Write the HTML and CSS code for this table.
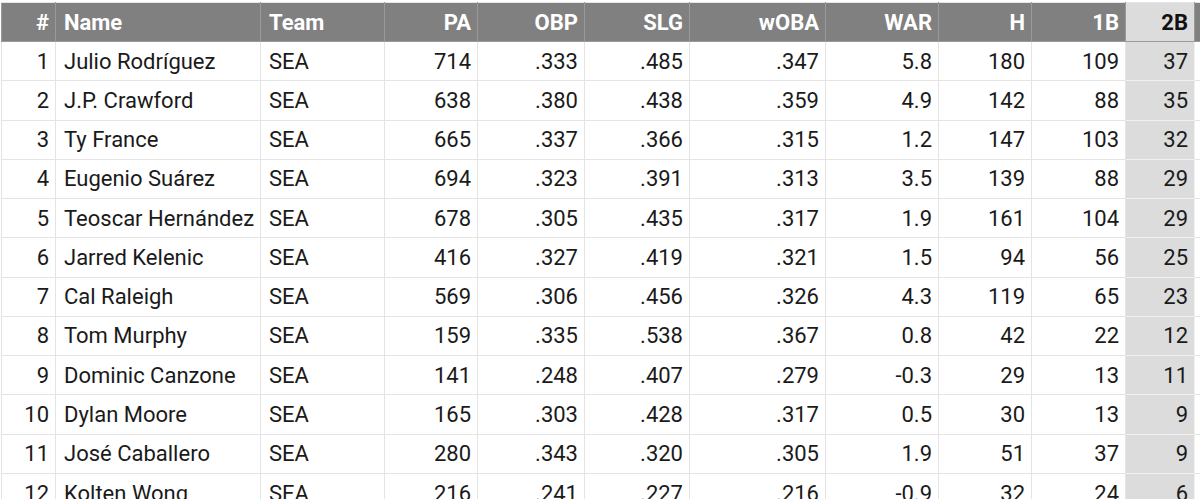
FILE: index.html
```html
<!DOCTYPE html>
<html>
<head>
<meta charset="utf-8">
<link rel="stylesheet" href="styles.css">
</head>
<body>
<div class="wrap">
<table class="stats">
<colgroup>
<col class="c-rank"><col class="c-name"><col class="c-team"><col class="c-pa"><col class="c-obp"><col class="c-slg"><col class="c-woba"><col class="c-war"><col class="c-h"><col class="c-1b"><col class="c-2b"><col class="c-3b">
</colgroup>
<thead>
<tr><th class="num">#</th><th>Name</th><th>Team</th><th class="num">PA</th><th class="num">OBP</th><th class="num">SLG</th><th class="num">wOBA</th><th class="num">WAR</th><th class="num">H</th><th class="num">1B</th><th class="num sorted">2B</th><th class="num"></th></tr>
</thead>
<tbody>
<tr><td class="num">1</td><td>Julio Rodríguez</td><td>SEA</td><td class="num">714</td><td class="num">.333</td><td class="num">.485</td><td class="num">.347</td><td class="num">5.8</td><td class="num">180</td><td class="num">109</td><td class="num sorted">37</td><td></td></tr>
<tr><td class="num">2</td><td>J.P. Crawford</td><td>SEA</td><td class="num">638</td><td class="num">.380</td><td class="num">.438</td><td class="num">.359</td><td class="num">4.9</td><td class="num">142</td><td class="num">88</td><td class="num sorted">35</td><td></td></tr>
<tr><td class="num">3</td><td>Ty France</td><td>SEA</td><td class="num">665</td><td class="num">.337</td><td class="num">.366</td><td class="num">.315</td><td class="num">1.2</td><td class="num">147</td><td class="num">103</td><td class="num sorted">32</td><td></td></tr>
<tr><td class="num">4</td><td>Eugenio Suárez</td><td>SEA</td><td class="num">694</td><td class="num">.323</td><td class="num">.391</td><td class="num">.313</td><td class="num">3.5</td><td class="num">139</td><td class="num">88</td><td class="num sorted">29</td><td></td></tr>
<tr><td class="num">5</td><td>Teoscar Hernández</td><td>SEA</td><td class="num">678</td><td class="num">.305</td><td class="num">.435</td><td class="num">.317</td><td class="num">1.9</td><td class="num">161</td><td class="num">104</td><td class="num sorted">29</td><td></td></tr>
<tr><td class="num">6</td><td>Jarred Kelenic</td><td>SEA</td><td class="num">416</td><td class="num">.327</td><td class="num">.419</td><td class="num">.321</td><td class="num">1.5</td><td class="num">94</td><td class="num">56</td><td class="num sorted">25</td><td></td></tr>
<tr><td class="num">7</td><td>Cal Raleigh</td><td>SEA</td><td class="num">569</td><td class="num">.306</td><td class="num">.456</td><td class="num">.326</td><td class="num">4.3</td><td class="num">119</td><td class="num">65</td><td class="num sorted">23</td><td></td></tr>
<tr><td class="num">8</td><td>Tom Murphy</td><td>SEA</td><td class="num">159</td><td class="num">.335</td><td class="num">.538</td><td class="num">.367</td><td class="num">0.8</td><td class="num">42</td><td class="num">22</td><td class="num sorted">12</td><td></td></tr>
<tr><td class="num">9</td><td>Dominic Canzone</td><td>SEA</td><td class="num">141</td><td class="num">.248</td><td class="num">.407</td><td class="num">.279</td><td class="num">-0.3</td><td class="num">29</td><td class="num">13</td><td class="num sorted">11</td><td></td></tr>
<tr><td class="num">10</td><td>Dylan Moore</td><td>SEA</td><td class="num">165</td><td class="num">.303</td><td class="num">.428</td><td class="num">.317</td><td class="num">0.5</td><td class="num">30</td><td class="num">13</td><td class="num sorted">9</td><td></td></tr>
<tr><td class="num">11</td><td>José Caballero</td><td>SEA</td><td class="num">280</td><td class="num">.343</td><td class="num">.320</td><td class="num">.305</td><td class="num">1.9</td><td class="num">51</td><td class="num">37</td><td class="num sorted">9</td><td></td></tr>
<tr><td class="num">12</td><td>Kolten Wong</td><td>SEA</td><td class="num">216</td><td class="num">.241</td><td class="num">.227</td><td class="num">.216</td><td class="num">-0.9</td><td class="num">32</td><td class="num">24</td><td class="num sorted">6</td><td></td></tr>
</tbody>
</table>
</div>
</body>
</html>
```

FILE: styles.css
```css
html, body {
  margin: 0;
  padding: 0;
  background: #ffffff;
  overflow: hidden;
  width: 1200px;
  height: 499px;
}

.wrap {
  padding: 2px 0 0 1px;
  width: 1400px;
}

.stats {
  border-collapse: collapse;
  table-layout: fixed;
  width: 1305px;
  font-family: Roboto, "Liberation Sans", sans-serif;
  font-size: 22px;
  color: #1a1a1a;
}

.c-rank { width: 54px; }
.c-name { width: 205px; }
.c-team { width: 124px; }
.c-pa { width: 93px; }
.c-obp { width: 107px; }
.c-slg { width: 105px; }
.c-woba { width: 136px; }
.c-war { width: 113px; }
.c-h { width: 93px; }
.c-1b { width: 94px; }
.c-2b { width: 69px; }
.c-3b { width: 112px; }

.stats th {
  background: #808080;
  color: #ffffff;
  font-weight: 700;
  height: 38px;
  padding: 0 7px 0 8px;
  text-align: left;
  border: 1px solid #9a9a9a;
  border-top-color: #e6e6e6;
  white-space: nowrap;
}

.stats td {
  height: 38.27px;
  padding: 0 7px 0 8px;
  border: 1px solid #e4e4e4;
  white-space: nowrap;
  text-align: left;
}

.stats .num {
  text-align: right;
  padding-right: 6px;
}

.stats th.sorted {
  background: #dcdcdc;
  color: #111111;
}

.stats td.sorted {
  background: #dcdcdc;
  border-color: #f0f0f0;
}
```
